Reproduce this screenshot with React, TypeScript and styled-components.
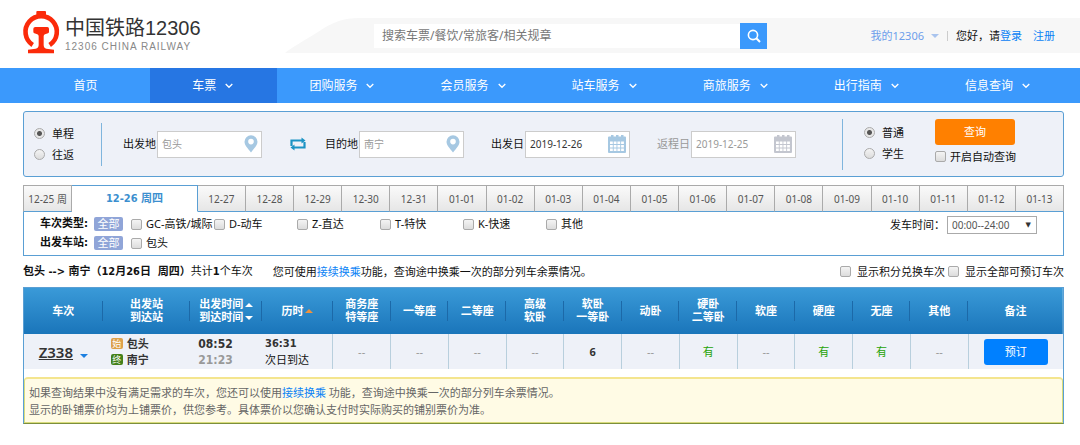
import React from 'react';
import styled, { createGlobalStyle, css } from 'styled-components';

const latin = '"Noto Sans", "Noto Sans CJK SC", sans-serif';
const strong = '"DejaVu Sans Condensed", "Noto Sans CJK SC", sans-serif';

const GlobalStyle = createGlobalStyle`
  *, *::before, *::after { box-sizing: border-box; }
  body { margin: 0; background: #fff; color: #111; font: 11px/16px ${latin}; }
  button, input, select { font: inherit; margin: 0; }
  a { color: #0a82f5; text-decoration: none; }
`;

/* ---------- header ---------- */
const Header = styled.header`
  display: flex;
  align-items: flex-start;
  height: 68px;
`;
const Brand = styled.a`
  display: flex;
  flex: none;
  gap: 3px;
  width: 285px;
  padding: 11px 0 0 22px;
`;
const BrandText = styled.span`
  display: flex;
  flex-direction: column;
  padding-top: 5px;
`;
const BrandName = styled.span`
  color: #333;
  font: 20px/24px "Liberation Sans", "Noto Sans CJK SC", sans-serif;
`;
const BrandSub = styled.span`
  color: #888;
  font: 10px/13px "Liberation Sans", sans-serif;
  letter-spacing: 1px;
`;
const Band = styled.div`
  display: flex;
  flex: 1;
  margin-top: 18px;
`;
const BandBody = styled.div`
  display: flex;
  flex: 1;
  align-items: center;
  height: 35px;
  padding: 0 25px 0 14px;
  background: #f7f7f7;
  white-space: nowrap;
`;
const SearchForm = styled.form`
  display: flex;
  align-items: center;
  flex: 0 1 393px;
`;
const SearchInput = styled.input`
  flex: 1;
  min-width: 0;
  height: 24px;
  padding: 0 8px;
  border: 0;
  background: #fff;
  font-size: 12px;
  color: #777;
  &::placeholder { color: #777; opacity: 1; }
`;
const SearchButton = styled.button`
  display: grid;
  place-items: center;
  width: 27px;
  height: 26px;
  padding: 0;
  border: 0;
  background: #3b99fc;
`;
const Account = styled.nav`
  display: flex;
  align-items: center;
  margin-left: auto;
`;
const MyLink = styled.a`
  display: flex;
  align-items: center;
  gap: 7px;
  color: #6d9eeb;
`;
const Caret = styled.i<{ $up?: boolean; $color: string }>`
  display: inline-block;
  border: 4px solid transparent;
  ${p => p.$up
    ? css`border-top: 0; border-bottom-color: ${p.$color};`
    : css`border-bottom: 0; border-top-color: ${p.$color};`}
`;
const Bar = styled.span`
  width: 1px;
  height: 10px;
  margin: 0 8px;
  background: #ccc;
`;
const Register = styled.a`
  margin-left: 11px;
`;

/* ---------- main nav ---------- */
const MainNav = styled.nav`
  display: flex;
  height: 35px;
  padding: 0 16px 0 23px;
  background: #3b99fc;
`;
const NavItem = styled.a<{ $active?: boolean; $wide?: boolean }>`
  display: flex;
  flex: ${p => (p.$wide ? 131 : 127)} 1 0;
  align-items: center;
  justify-content: center;
  gap: 9px;
  padding-right: 2px;
  background: ${p => (p.$active ? '#2676e3' : 'transparent')};
  color: #fff;
  font-size: 12px;
`;

/* ---------- shared form parts ---------- */
const Page = styled.main`
  padding: 8px 16px 20px 23px;
`;
const box = css`
  appearance: none;
  flex: none;
  width: 11px;
  height: 11px;
  border: 1px solid #aaa;
  background: linear-gradient(#f4f4f4, #dcdcdc);
`;
const Check = styled.input.attrs({ type: 'checkbox' })`
  ${box}
  border-radius: 2px;
`;
const Radio = styled.input.attrs({ type: 'radio' })`
  ${box}
  border-radius: 50%;
  &:checked { background: radial-gradient(circle, #555 0 2px, #e8e8e8 3px); }
`;
const Choice = styled.label<{ $gap: number }>`
  display: flex;
  align-items: center;
  gap: ${p => p.$gap}px;
  white-space: nowrap;
`;

/* ---------- query panel ---------- */
const Query = styled.form`
  display: flex;
  align-items: center;
  height: 66px;
  border: 1px solid #5a9fd4;
  border-radius: 3px;
  background: #eef1f8;
`;
const RadioGroup = styled.div`
  display: flex;
  flex-direction: column;
  justify-content: center;
  gap: 5px;
`;
const TripType = styled(RadioGroup)`
  width: 78px;
  height: 43px;
  padding-left: 10px;
  border-right: 1px solid #7fb5dd;
`;
const Fields = styled.div`
  display: flex;
  flex: 1;
  align-items: center;
  justify-content: space-between;
  padding: 0 46px 0 21px;
`;
const Route = styled.div`
  display: flex;
  align-items: center;
`;
const Field = styled.label<{ $muted?: boolean }>`
  display: flex;
  align-items: center;
  gap: 1px;
  color: ${p => (p.$muted ? '#999' : '#111')};
  white-space: nowrap;
`;
const FieldBox = styled.span`
  display: flex;
  align-items: center;
  width: 105px;
  height: 27px;
  padding-right: 3px;
  border: 1px solid #ccc;
  background: #fff;
`;
const FieldInput = styled.input<{ $tone: string }>`
  flex: 1;
  min-width: 0;
  padding: 0 4px;
  border: 0;
  background: none;
  color: ${p => p.$tone};
  font-size: 10px;
  &::placeholder { color: ${p => p.$tone}; opacity: 1; }
`;
const Swap = styled.button`
  display: flex;
  margin: 0 19px 0 28px;
  padding: 0;
  border: 0;
  background: none;
`;
const QuerySide = styled.div`
  display: flex;
  align-items: flex-start;
  gap: 31px;
  height: 51px;
  padding: 0 47px 0 21px;
  border-left: 1px solid #7fb5dd;
`;
const PassengerType = styled(RadioGroup)`
  padding-top: 6px;
`;
const Submit = styled.div`
  display: flex;
  flex-direction: column;
  gap: 4px;
`;
const QueryButton = styled.button`
  width: 80px;
  height: 26px;
  padding: 0;
  border: 0;
  border-radius: 3px;
  background: #ff8000;
  color: #fff;
`;

/* ---------- date tabs and filters ---------- */
const Tabs = styled.div`
  display: flex;
  height: 27px;
  margin-top: 8px;
`;
const Tab = styled.button<{ $active?: boolean }>`
  flex: 48 1 0;
  min-width: 0;
  padding: 0;
  overflow: hidden;
  border: 1px solid #aaa;
  border-width: 1px 1px 1px 0;
  border-bottom-color: #5a9fd4;
  background: linear-gradient(#fafafa, #e6e6e6);
  color: #555;
  font-size: 10px;
  white-space: nowrap;
  &:first-child { border-left-width: 1px; }
  ${p => p.$active && css`
    flex-grow: 127;
    border-color: #5a9fd4;
    border-bottom-color: #fff;
    background: #fff;
    color: #3c8fcf;
    font: bold 11px/16px ${strong};
  `}
`;
const Filters = styled.section`
  display: flex;
  align-items: flex-start;
  height: 44px;
  padding: 3px 26px 0 16px;
  border: 1px solid #5a9fd4;
  border-top: 0;
`;
const FilterRows = styled.div`
  display: flex;
  flex: 1;
  flex-direction: column;
  gap: 1px;
`;
const FilterRow = styled.div`
  display: flex;
  align-items: center;
  height: 18px;
`;
const FilterName = styled.b`
  width: 54px;
  font-family: ${strong};
  white-space: nowrap;
`;
const All = styled.button`
  width: 29px;
  height: 14px;
  margin-right: 8px;
  padding: 0;
  border: 0;
  border-radius: 2px;
  background: #90a5d8;
  color: #fff;
  line-height: 14px;
`;
const FilterChoice = styled(Choice)`
  width: 83px;
`;
const TimeLabel = styled.label`
  display: flex;
  align-items: center;
  gap: 2px;
`;
const SelectBox = styled.span`
  display: flex;
  align-items: center;
  width: 90px;
  height: 18px;
  margin-top: 1px;
  padding-right: 5px;
  border: 1px solid #aaa;
  color: #333;
  &::after { content: "▼"; font: 7px/8px "DejaVu Sans", sans-serif; }
`;
const Select = styled.select`
  flex: 1;
  min-width: 0;
  appearance: none;
  padding: 0 4px;
  border: 0;
  background: none;
  color: #555;
  font-size: 10px;
`;

/* ---------- results ---------- */
const Summary = styled.div`
  display: flex;
  align-items: center;
  height: 31px;
  white-space: nowrap;
`;
const Trip = styled.p`
  margin: 0 20px 0 0;
  font-family: ${strong};
`;
const Hint = styled.p`
  margin: 0;
`;
const SummaryOptions = styled.div`
  display: flex;
  gap: 3px;
  margin-left: auto;
`;
const Results = styled.section`
  border: 1px solid #5a9fd4;
  border-bottom-color: #7c8f3c;
`;
const Table = styled.table`
  width: 100%;
  border-collapse: collapse;
  table-layout: fixed;
`;
const HeadRow = styled.tr`
  height: 46px;
  background: linear-gradient(#3a9ad8, #1a75ba);
  color: #fff;
`;
const Th = styled.th`
  padding: 0;
  background: linear-gradient(#1c69a8, #1c69a8) right center / 1px 20px no-repeat;
  font: bold 11px/13px ${strong};
  white-space: nowrap;
  &:last-child { background: none; }
`;
const SortLine = styled.span`
  display: flex;
  align-items: center;
  justify-content: center;
  gap: 2px;
`;
const Row = styled.tr`
  height: 35px;
  background: #eef1f8;
`;
const Td = styled.td<{ $line?: boolean }>`
  padding: 0;
  border-right: ${p => (p.$line ? '1px solid #b8cfdd' : '0')};
  text-align: center;
`;
const TdLeft = styled(Td)<{ $pad: number }>`
  padding-left: ${p => p.$pad}px;
  text-align: left;
`;
const TrainLink = styled.a`
  margin-right: 7px;
  color: #333;
  font: 600 15px/20px "Noto Sans", sans-serif;
  text-decoration: underline;
`;
const Station = styled.div`
  display: flex;
  align-items: center;
  gap: 4px;
  font-weight: 600;
  color: #333;
`;
const Mark = styled.span<{ $color: string }>`
  width: 12px;
  height: 11px;
  border-radius: 2px;
  background: ${p => p.$color};
  color: #fff;
  font: 9px/11px "Noto Sans CJK SC", sans-serif;
  text-align: center;
`;
const Time = styled.div<{ $late?: boolean }>`
  color: ${p => (p.$late ? '#999' : '#333')};
  font: bold 12px/16px ${strong};
`;
const Duration = styled.b`
  display: block;
  color: #333;
  font-family: ${strong};
`;
const Seat = styled.span<{ $kind: string }>`
  color: ${p => (p.$kind === '有' ? '#26a306' : p.$kind === '--' ? '#999' : '#333')};
  font-weight: ${p => (p.$kind === '6' ? 'bold' : 'normal')};
`;
const Book = styled.button`
  width: 64px;
  height: 26px;
  padding: 0;
  border: 0;
  border-radius: 3px;
  background: #0080ff;
  color: #fff;
`;
const Note = styled.div`
  margin-top: 8px;
  padding: 5px 4px 4px;
  border: 1px solid #d9dc7c;
  border-top: 2px solid #f4e58e;
  border-radius: 4px 4px 0 0;
  background: #fffbe5;
  color: #666;
  line-height: 17px;
`;
const NoteLine = styled.p`
  margin: 0;
`;

/* ---------- drawings ---------- */
const Logo = () => (
  <svg width="40" height="45" viewBox="0 0 120 135" aria-hidden="true" fill="#fb2a0a">
    <path d="M32 102A47 47 0 1 1 83 102" fill="none" stroke="#fb2a0a" strokeWidth="14" />
    <path d="M43 3q0-3 3-3h23q3 0 3 3v12H43z" />
    <path d="M40 48h36q5 0 5 5v9q0 4-3 5l-9 3q-4 1-4 6v26q0 9 8 11l23 3v11H18v-11l23-3q9-2 9-11V76q0-5-4-6l-9-3q-3-1-3-5v-9q0-5 6-5z" />
  </svg>
);
const Slope = () => (
  <svg width="75" height="35" viewBox="0 0 75 35" aria-hidden="true">
    <path d="M0 35C6 30 20 22 33 14C48 4 58 0 75 0V35z" fill="#f7f7f7" />
  </svg>
);
const Chevron = () => (
  <svg width="8" height="6" viewBox="0 0 8 6" aria-hidden="true">
    <path d="M0.7 1L4 4.3L7.3 1" fill="none" stroke="#fff" strokeWidth="1.3" />
  </svg>
);
const Magnifier = () => (
  <svg width="14" height="14" viewBox="0 0 14 14" fill="none" stroke="#fff" aria-hidden="true">
    <circle cx="6" cy="6" r="4.6" strokeWidth="1.6" />
    <path d="M9.3 9.3L13 13" strokeWidth="2" />
  </svg>
);
const Pin = () => (
  <svg width="14" height="18" viewBox="0 0 14 18" aria-hidden="true">
    <path
      d="M7 0.3a6.5 6.5 0 0 1 6.5 6.5c0 3.6-3.5 6.8-6.5 10.7c-3-3.9-6.5-7.1-6.5-10.7A6.5 6.5 0 0 1 7 0.3zM7 3.8a2.8 2.8 0 1 0 0 5.6a2.8 2.8 0 0 0 0-5.6z"
      fill="#a6c8e2"
      fillRule="evenodd"
    />
  </svg>
);
const Calendar = ({ color }: { color: string }) => (
  <svg width="18" height="18" viewBox="0 0 18 18" fill={color} aria-hidden="true">
    <path d="M3 0h2.5v1.5h2.5V0h2.5v1.5h2.5V0h2.5v1.5H17q1 0 1 1V17q0 1-1 1H1q-1 0-1-1V2.5q0-1 1-1h2z" />
    {[6.5, 10, 13.5].map(y => [2, 5.7, 9.4, 13.1].map(x => (
      <rect key={`${x}-${y}`} x={x} y={y} width="2.8" height="2.5" fill="#fff" />
    )))}
  </svg>
);
const SwapIcon = () => (
  <svg width="16" height="14" viewBox="0 0 16 14" aria-hidden="true">
    <path d="M1.5 9V3.500H12M14.500 5V10.500H4" fill="none" stroke="#1b93c4" strokeWidth="2.2" />
    <path d="M11.500 0.500l4 3l-4 3zM4.500 7.500l-4 3l4 3z" fill="#1b93c4" />
  </svg>
);

const navItems = ['团购服务', '会员服务', '站车服务', '商旅服务', '出行指南', '信息查询'];
const dates = [
  '12-25 周', '12-26 周四', '12-27', '12-28', '12-29', '12-30', '12-31', '01-01', '01-02', '01-03',
  '01-04', '01-05', '01-06', '01-07', '01-08', '01-09', '01-10', '01-11', '01-12', '01-13',
];
const trainTypes = ['GC-高铁/城际', 'D-动车', 'Z-直达', 'T-特快', 'K-快速', '其他'];
const seats: [string[], string][] = [
  [['商务座', '特等座'], '--'],
  [['一等座'], '--'],
  [['二等座'], '--'],
  [['高级', '软卧'], '--'],
  [['软卧', '一等卧'], '6'],
  [['动卧'], '--'],
  [['硬卧', '二等卧'], '有'],
  [['软座'], '--'],
  [['硬座'], '有'],
  [['无座'], '有'],
  [['其他'], '--'],
];
const columns = [79, 88, 72, 71, ...seats.map(() => 58), 95];
const columnTotal = columns.reduce((a, b) => a + b, 0);

export default function App() {
  return (
    <>
      <GlobalStyle />
      <Header>
        <Brand href="#">
          <Logo />
          <BrandText>
            <BrandName>中国铁路12306</BrandName>
            <BrandSub>12306 CHINA RAILWAY</BrandSub>
          </BrandText>
        </Brand>
        <Band>
          <Slope />
          <BandBody>
            <SearchForm>
              <SearchInput aria-label="搜索" placeholder="搜索车票/餐饮/常旅客/相关规章" />
              <SearchButton type="button" aria-label="搜索"><Magnifier /></SearchButton>
            </SearchForm>
            <Account>
              <MyLink href="#">我的12306 <Caret $color="#a9c4ee" /></MyLink>
              <Bar />
              <span>您好，请<a href="#">登录</a></span>
              <Register href="#">注册</Register>
            </Account>
          </BandBody>
        </Band>
      </Header>

      <MainNav>
        <NavItem href="#">首页</NavItem>
        <NavItem href="#" $active>车票 <Chevron /></NavItem>
        {navItems.map(name => (
          <NavItem key={name} href="#" $wide>{name} <Chevron /></NavItem>
        ))}
      </MainNav>

      <Page>
        <Query>
          <TripType>
            <Choice $gap={7}><Radio name="trip" defaultChecked />单程</Choice>
            <Choice $gap={7}><Radio name="trip" />往返</Choice>
          </TripType>
          <Fields>
            <Route>
              <Field>出发地<FieldBox><FieldInput $tone="#999" placeholder="包头" /><Pin /></FieldBox></Field>
              <Swap type="button" aria-label="交换"><SwapIcon /></Swap>
              <Field>目的地<FieldBox><FieldInput $tone="#999" placeholder="南宁" /><Pin /></FieldBox></Field>
            </Route>
            <Field>
              出发日
              <FieldBox><FieldInput $tone="#333" defaultValue="2019-12-26" /><Calendar color="#a6c8e2" /></FieldBox>
            </Field>
            <Field $muted>
              返程日
              <FieldBox><FieldInput $tone="#999" defaultValue="2019-12-25" /><Calendar color="#c3c6cf" /></FieldBox>
            </Field>
          </Fields>
          <QuerySide>
            <PassengerType>
              <Choice $gap={7}><Radio name="passenger" defaultChecked />普通</Choice>
              <Choice $gap={7}><Radio name="passenger" />学生</Choice>
            </PassengerType>
            <Submit>
              <QueryButton type="button">查询</QueryButton>
              <Choice $gap={4}><Check />开启自动查询</Choice>
            </Submit>
          </QuerySide>
        </Query>

        <Tabs>
          {dates.map((date, i) => <Tab key={date} type="button" $active={i === 1}>{date}</Tab>)}
        </Tabs>
        <Filters>
          <FilterRows>
            <FilterRow>
              <FilterName>车次类型:</FilterName>
              <All type="button">全部</All>
              {trainTypes.map(type => (
                <FilterChoice key={type} $gap={4}><Check />{type}</FilterChoice>
              ))}
            </FilterRow>
            <FilterRow>
              <FilterName>出发车站:</FilterName>
              <All type="button">全部</All>
              <FilterChoice $gap={4}><Check />包头</FilterChoice>
            </FilterRow>
          </FilterRows>
          <TimeLabel>
            发车时间：
            <SelectBox>
              <Select defaultValue="all"><option value="all">00:00--24:00</option></Select>
            </SelectBox>
          </TimeLabel>
        </Filters>

        <Summary>
          <Trip><b>包头 --&gt; 南宁（12月26日&nbsp; 周四）</b>共计<b>1</b>个车次</Trip>
          <Hint>您可使用<a href="#">接续换乘</a>功能，查询途中换乘一次的部分列车余票情况。</Hint>
          <SummaryOptions>
            <Choice $gap={6}><Check />显示积分兑换车次</Choice>
            <Choice $gap={6}><Check />显示全部可预订车次</Choice>
          </SummaryOptions>
        </Summary>

        <Results>
          <Table>
            <colgroup>
              {columns.map((w, i) => <col key={i} style={{ width: `${(w / columnTotal) * 100}%` }} />)}
            </colgroup>
            <thead>
              <HeadRow>
                <Th>车次</Th>
                <Th>出发站<br />到达站</Th>
                <Th>
                  <SortLine>出发时间<Caret $up $color="#fff" /></SortLine>
                  <SortLine>到达时间<Caret $color="#fff" /></SortLine>
                </Th>
                <Th><SortLine>历时<Caret $up $color="#f0923c" /></SortLine></Th>
                {seats.map(([names]) => (
                  <Th key={names.join()}>{names[0]}{names[1] && <><br />{names[1]}</>}</Th>
                ))}
                <Th>备注</Th>
              </HeadRow>
            </thead>
            <tbody>
              <Row>
                <Td><TrainLink href="#">Z338</TrainLink><Caret $color="#1c7fe0" /></Td>
                <TdLeft $pad={8}>
                  <Station><Mark $color="#dda14a">始</Mark>包头</Station>
                  <Station><Mark $color="#43801a">终</Mark>南宁</Station>
                </TdLeft>
                <TdLeft $pad={8}>
                  <Time>08:52</Time>
                  <Time $late>21:23</Time>
                </TdLeft>
                <TdLeft $pad={3} $line><Duration>36:31</Duration>次日到达</TdLeft>
                {seats.map(([names, value]) => (
                  <Td key={names.join()} $line><Seat $kind={value}>{value}</Seat></Td>
                ))}
                <Td><Book type="button">预订</Book></Td>
              </Row>
            </tbody>
          </Table>
          <Note>
            <NoteLine>
              如果查询结果中没有满足需求的车次，您还可以使用<a href="#">接续换乘</a> 功能，查询途中换乘一次的部分列车余票情况。
            </NoteLine>
            <NoteLine>显示的卧铺票价均为上铺票价，供您参考。具体票价以您确认支付时实际购买的铺别票价为准。</NoteLine>
          </Note>
        </Results>
      </Page>
    </>
  );
}
